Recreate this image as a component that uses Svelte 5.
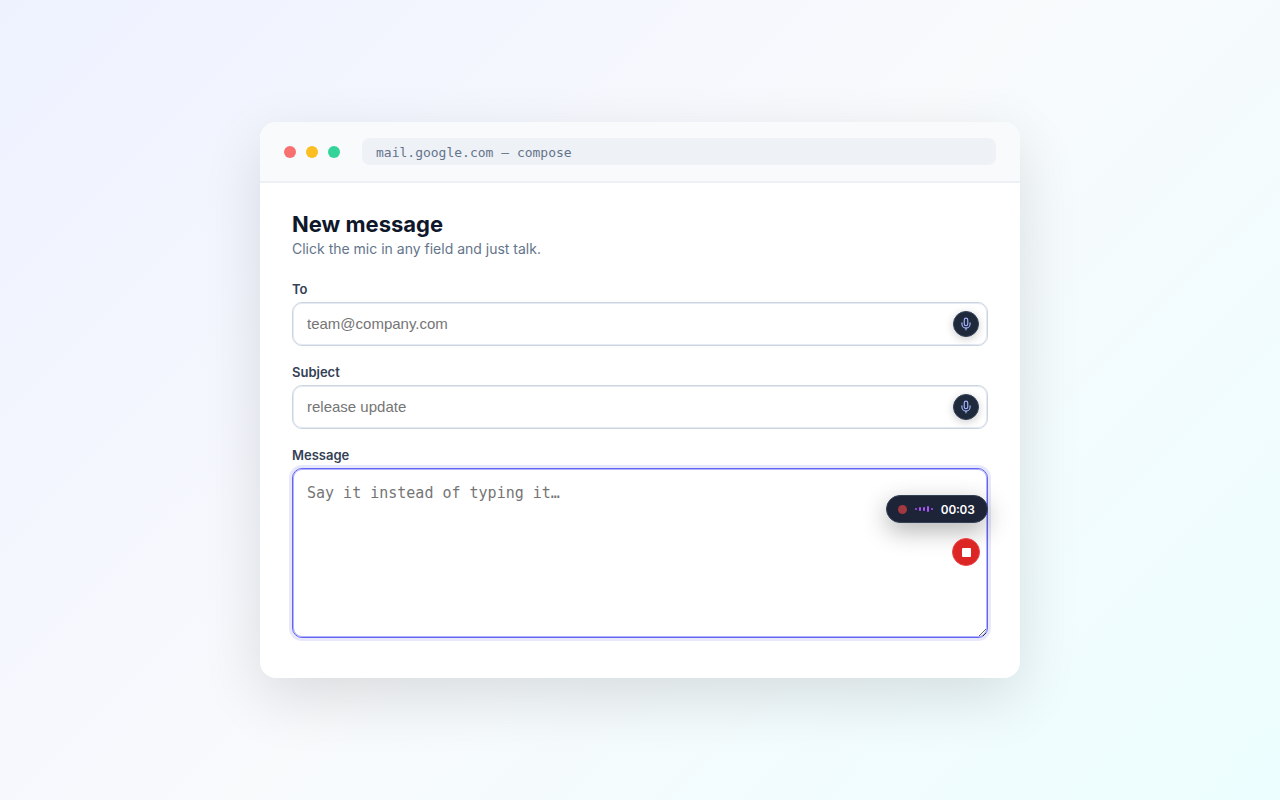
<script lang="ts">
  const fields = [
    { id: "to", label: "To", placeholder: "team@company.com" },
    { id: "subject", label: "Subject", placeholder: "release update" },
  ];

  const levels = [2, 4, 4, 6, 2];

  let recording = $state(true);
  let seconds = $state(3);

  let elapsed = $derived(
    `${String(Math.floor(seconds / 60)).padStart(2, "0")}:${String(seconds % 60).padStart(2, "0")}`
  );

  function toggle() {
    recording = !recording;
    seconds = 0;
  }
</script>

{#snippet micIcon()}
  <svg class="mic-icon" viewBox="0 0 24 24" aria-hidden="true">
    <path d="M12 2a3 3 0 0 0-3 3v7a3 3 0 0 0 6 0V5a3 3 0 0 0-3-3Z" />
    <path d="M19 10v2a7 7 0 0 1-14 0v-2" />
    <path d="M12 19v3" />
  </svg>
{/snippet}

<main class="page">
  <section class="window">
    <header class="titlebar">
      <div class="lights">
        <span class="light red"></span>
        <span class="light yellow"></span>
        <span class="light green"></span>
      </div>
      <div class="url">mail.google.com — compose</div>
    </header>

    <form class="compose" onsubmit={(e) => e.preventDefault()}>
      <h1>New message</h1>
      <p class="hint">Click the mic in any field and just talk.</p>

      {#each fields as field (field.id)}
        <div class="field">
          <label for={field.id}>{field.label}</label>
          <div class="control">
            <input id={field.id} type="text" placeholder={field.placeholder} />
            <button class="mic" type="button" aria-label="Dictate {field.label}">
              {@render micIcon()}
            </button>
          </div>
        </div>
      {/each}

      <div class="field">
        <label for="message">Message</label>
        <div class="control">
          <textarea id="message" class:active={recording} placeholder="Say it instead of typing it…"></textarea>
          <div class="dictation">
            {#if recording}
              <div class="pill">
                <span class="rec-dot"></span>
                <span class="wave">
                  {#each levels as level}
                    <span class="bar" style="height: {level}px"></span>
                  {/each}
                </span>
                <span class="time">{elapsed}</span>
              </div>
              <button class="stop" type="button" aria-label="Stop recording" onclick={toggle}>
                <span class="stop-square"></span>
              </button>
            {:else}
              <button class="mic inline" type="button" aria-label="Dictate Message" onclick={toggle}>
                {@render micIcon()}
              </button>
            {/if}
          </div>
        </div>
      </div>
    </form>
  </section>
</main>

<style>
  :global(body) {
    margin: 0;
    font-family: Inter, sans-serif;
  }

  .page {
    box-sizing: border-box;
    min-height: 100vh;
    padding: 24px;
    display: flex;
    align-items: center;
    justify-content: center;
    background: linear-gradient(135deg, #eef2ff 0%, #f8fafc 50%, #ecfeff 100%);
  }

  .window {
    width: 100%;
    max-width: 760px;
    background: #fff;
    border-radius: 16px;
    overflow: hidden;
    box-shadow: 0 20px 60px rgba(0, 0, 0, 0.12);
  }

  .titlebar {
    display: flex;
    align-items: center;
    gap: 22px;
    padding: 16px 24px;
    background: #f8fafc;
    border-bottom: 2px solid #edf1f6;
  }

  .lights {
    display: flex;
    gap: 10px;
  }

  .light {
    width: 12px;
    height: 12px;
    border-radius: 50%;
  }

  .red {
    background: #f87171;
  }

  .yellow {
    background: #fbbf24;
  }

  .green {
    background: #34d399;
  }

  .url {
    flex: 1;
    padding: 7px 14px 5px;
    border-radius: 8px;
    background: #eef1f6;
    color: #64748b;
    font: 13px/15px "DejaVu Sans Mono", monospace;
  }

  .compose {
    padding: 28px 32px 40px;
  }

  h1 {
    margin: 0;
    font-size: 22px;
    line-height: 27px;
    font-weight: 700;
    color: #0f172a;
  }

  .hint {
    margin: 0 0 21px;
    font-size: 14px;
    line-height: 22px;
    color: #64748b;
  }

  .field + .field {
    margin-top: 18px;
  }

  label {
    display: block;
    margin-bottom: 5px;
    font-size: 13px;
    line-height: 16px;
    font-weight: 600;
    color: #334155;
  }

  .control {
    position: relative;
  }

  input,
  textarea {
    display: block;
    box-sizing: border-box;
    width: 100%;
    border: 1px solid #cbd5e1;
    border-radius: 10px;
    background: #fff;
    color: #0f172a;
    outline: none;
    box-shadow: inset 0 0 0 1px rgba(203, 213, 225, 0.5);
  }

  input {
    height: 44px;
    padding: 0 48px 2px 14px;
    font: 15px "Liberation Sans", Arial, sans-serif;
  }

  textarea {
    height: 170px;
    padding: 15px 14px;
    font: 15px/18px "DejaVu Sans Mono", monospace;
    resize: vertical;
  }

  input::placeholder,
  textarea::placeholder {
    color: #757575;
  }

  input:focus,
  textarea:focus,
  textarea.active {
    border-color: #6366f1;
    box-shadow:
      inset 0 0 0 1px rgba(99, 102, 241, 0.5),
      0 0 0 3px rgba(99, 102, 241, 0.15);
  }

  .mic {
    position: absolute;
    top: 9px;
    right: 9px;
    display: grid;
    place-items: center;
    width: 26px;
    height: 26px;
    padding: 0;
    border: 1px solid #334155;
    border-radius: 50%;
    background: #1e293b;
    color: #a5b4fc;
    cursor: pointer;
    box-shadow: 0 2px 8px rgba(0, 0, 0, 0.2);
  }

  .mic.inline {
    position: static;
    margin-right: 9px;
  }

  .mic-icon {
    width: 14px;
    height: 14px;
    fill: none;
    stroke: currentColor;
    stroke-width: 2;
    stroke-linecap: round;
    stroke-linejoin: round;
  }

  .dictation {
    position: absolute;
    top: 27px;
    right: 0;
    display: flex;
    flex-direction: column;
    align-items: flex-end;
    gap: 15px;
  }

  .pill {
    display: flex;
    align-items: center;
    gap: 8px;
    box-sizing: border-box;
    height: 28px;
    padding: 0 12px 0 11px;
    border: 1px solid #334155;
    border-radius: 14px;
    background: #1e2438;
    color: #fff;
    box-shadow: 0 8px 24px rgba(0, 0, 0, 0.3);
  }

  .rec-dot {
    width: 9px;
    height: 9px;
    border-radius: 50%;
    background: #a3383f;
  }

  .wave {
    display: flex;
    align-items: center;
    gap: 2px;
  }

  .bar {
    width: 2px;
    border-radius: 1px;
    background: #a855f7;
  }

  .time {
    font-size: 12px;
    font-weight: 600;
    font-variant-numeric: tabular-nums;
  }

  .stop {
    display: grid;
    place-items: center;
    width: 28px;
    height: 28px;
    margin-right: 8px;
    padding: 0;
    border: 1px solid #ef4444;
    border-radius: 50%;
    background: #dc2626;
    cursor: pointer;
  }

  .stop-square {
    width: 9px;
    height: 9px;
    border-radius: 1px;
    background: #fff;
  }
</style>
